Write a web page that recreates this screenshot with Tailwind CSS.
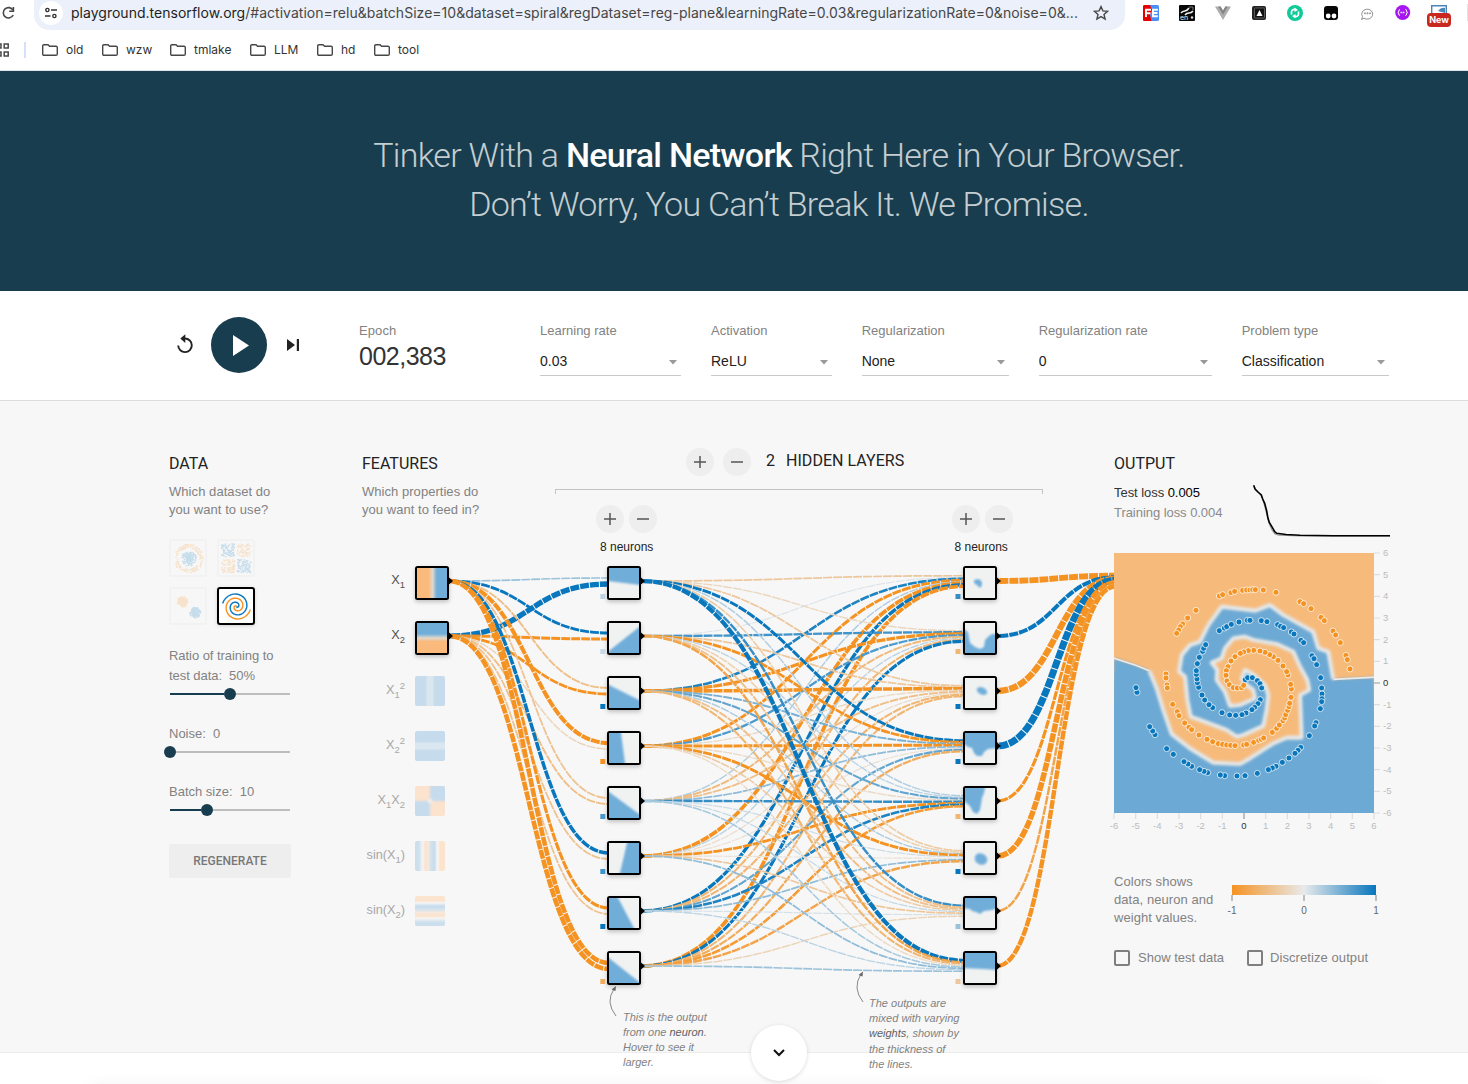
<!DOCTYPE html>
<html lang="en">
<head>
<meta charset="utf-8">
<title>A Neural Network Playground</title>
<script src="https://cdn.jsdelivr.net/npm/@tailwindcss/browser@4"></script>
</head>
<body class="w-[1468px] h-[1084px] overflow-hidden bg-white font-['Liberation_Sans',sans-serif] text-[13px] text-[#828282]">

<!-- Browser chrome -->
<header class="h-[71px] border-b border-[#dde3e6] bg-white font-[Inter,sans-serif] text-[#1f1f1f]">
  <div class="flex h-[30px] items-start">
    <svg class="mt-[5px] ml-px h-4 w-4 shrink-0" viewBox="0 0 16 16" fill="none" stroke="#474747" stroke-width="1.6"><path d="M12 5.2A5.2 5.2 0 1 0 12.2 10"/><path d="M12.4 2v4.2H8.2"/></svg>
    <div class="ml-[17px] flex h-[30px] w-[1091px] shrink-0 items-start rounded-b-[15px] bg-[#ebf0fa]">
      <span class="mt-px ml-[5px] flex h-6 w-6 shrink-0 items-center justify-center rounded-full bg-white">
        <svg class="h-3 w-3" viewBox="0 0 12 12" fill="none" stroke="#333" stroke-width="1.4"><circle cx="2.4" cy="3" r="1.6"/><path d="M6 3h6M0 9h5.5"/><circle cx="9.4" cy="9" r="1.6"/></svg>
      </span>
      <span class="ml-2 w-[1010px] shrink-0 whitespace-nowrap text-[14px] leading-[26px] text-[#474747] tracking-[0.02px]"><span class="text-[#1f1f1f]">playground.tensorflow.org</span>/#activation=relu&amp;batchSize=10&amp;dataset=spiral&amp;regDataset=reg-plane&amp;learningRate=0.03&amp;regularizationRate=0&amp;noise=0&amp;...</span>
      <svg class="mt-[5px] ml-3 h-4 w-4 shrink-0" viewBox="0 0 16 16" fill="none" stroke="#474747" stroke-width="1.4" stroke-linejoin="miter"><path d="M8 1.6l1.900 4.300 4.700.4-3.600 3.100 1.100 4.600L8 11.600 3.900 14 5 9.400 1.400 6.300l4.700-.4z"/></svg>
    </div>
    <div class="ml-[18px] mt-[5px] flex gap-5">
      <svg class="h-4 w-4" viewBox="0 0 16 16"><rect width="16" height="16" rx="1.500" fill="#4a8ff5"/><path d="M1.500 0H7l2 5-2 5 1.500 6h-7A1.500 1.500 0 0 1 0 14.500v-13A1.500 1.500 0 0 1 1.500 0z" fill="#e80000"/><path d="M3 12V4.800h5M3 8.200h4.500M14.800 4.800H10v6.400h4.800M10 8h4.500" stroke="#fff" stroke-width="1.900" fill="none"/></svg>
      <svg class="h-4 w-4" viewBox="0 0 16 16"><rect width="16" height="16" rx="1" fill="#080808"/><path d="M2 8c3-4 5 0 8-5M6 10c3-4 5 0 8-4" stroke="#eee" stroke-width="1.500" fill="none"/><circle cx="13" cy="12.500" r="1.200" fill="#ddd"/><text x="1" y="14.500" font-size="7" fill="#eee">en</text><path d="M10 2h4v3" stroke="#777" fill="none"/></svg>
      <svg class="h-4 w-4" viewBox="0 0 16 16"><path d="M0 1.500h5.500L8 6l2.500-4.500H16L8 15z" fill="#adadad"/><path d="M3.200 1.500h2.500L8 5.500l2.300-4h2.500L8 9.800z" fill="#858585"/></svg>
      <svg class="h-4 w-4" viewBox="0 0 16 16"><rect x="1" y="1" width="14" height="14" rx="2" fill="#222"/><rect x="3.500" y="3" width="10" height="10" rx="1" fill="#111" stroke="#777" stroke-width=".7"/><path d="M8.500 5l3 6h-6z" fill="#fff"/></svg>
      <svg class="h-4 w-4" viewBox="0 0 16 16"><circle cx="8" cy="8" r="8" fill="#0fca98"/><path d="M4.500 9.500V7a2.500 2.500 0 0 1 4-2M11.500 6.500V9a2.500 2.500 0 0 1-4 2" stroke="#fff" stroke-width="1.700" fill="none"/><path d="M7.500 2.500L11 5 7.500 7zM8.500 13.500L5 11l3.500-2z" fill="#fff"/></svg>
      <svg class="h-4 w-4" viewBox="0 0 16 16"><rect x="1" y="1" width="14" height="14" rx="3" fill="#050505"/><circle cx="5.200" cy="11" r="2.400" fill="#fff"/><circle cx="11" cy="11" r="2.400" fill="#fff"/></svg>
      <svg class="h-4 w-4" viewBox="0 0 16 16" fill="none" stroke="#777" stroke-width=".8"><path d="M5 13.200L2.500 14.500l1-2.800A5.500 5 0 1 1 5 13.200z"/><circle cx="6" cy="8.300" r=".6"/><circle cx="8.500" cy="8.300" r=".6"/><circle cx="11" cy="8.300" r=".6"/></svg>
      <svg class="h-4 w-4" viewBox="0 0 16 16"><circle cx="7.700" cy="7.500" r="7.500" fill="#a616f0"/><path d="M5 4.500Q3.800 4.500 3.800 6T2.800 7.500Q3.800 7.500 3.800 9T5 10.500M10.400 4.500Q11.600 4.500 11.600 6t1 1.500q-1 0-1 1.500t-1.200 1.500" stroke="#fff" fill="none"/><path d="M5.500 7.500h4.500" stroke="#fff" stroke-width="1.300" stroke-dasharray="1.300 .8"/></svg>
      <div class="relative h-4 w-4">
        <svg class="h-4 w-4" viewBox="0 0 16 16"><path d="M.7 9V.7h14.600V9" fill="none" stroke="#4a85b8" stroke-width="1.400"/><path d="M7 6q3-4 7-3v5z" fill="#4a85b8"/></svg>
        <span class="absolute -left-1 top-[8px] h-[14px] w-6 rounded-[4px] bg-[#c8281f] text-center text-[9px] leading-[14px] font-bold text-white">New</span>
      </div>
    </div>
    <div class="ml-auto mt-1 h-[17px] w-px bg-[#e3e3e3]"></div>
  </div>
  <nav class="flex h-10 items-center text-[12px] text-[#333]">
    <svg class="h-[14px] w-[9px]" viewBox="0 0 9 14" fill="none" stroke="#474747" stroke-width="1.500"><path d="M-3 1h4v4h-4zM4.200.9h4v4h-4zM-3 9h4v4h-4zM4.200 9h4v4h-4z"/></svg>
    <div class="ml-[15px] h-4 w-[2px] bg-[#d3e1fb]"></div>
    <div id="bookmarks" class="contents"></div>
  </nav>
</header>

<!-- Banner -->
<section class="h-[220px] bg-[#183d4e] pt-[60px] pl-[90px] text-center font-[Roboto,sans-serif] text-[34px] leading-[49px] font-light text-white/75">
  <h1 class="whitespace-nowrap"><span class="tracking-[-0.73px]">Tinker With a <b class="font-medium text-white">Neural Network</b> Right Here in Your Browser.</span><br><span class="tracking-[-0.7px]">Don’t Worry, You Can’t Break It. We Promise.</span></h1>
</section>

<!-- Top controls -->
<section class="relative flex h-[110px] items-start border-b border-[#dcdcdc] bg-white pl-[175px] shadow-[0_1px_3px_rgba(0,0,0,.08)]">
  <svg class="mt-[43px] h-5 w-5" viewBox="0 0 20 20"><path d="M10 4.500A6.800 6.800 0 1 1 3.200 11.500" fill="none" stroke="#222" stroke-width="1.900"/><path d="M10.300.200V9L5.300 4.600z" fill="#222"/></svg>
  <div class="mt-[26px] ml-4 flex h-14 w-14 items-center justify-center rounded-full bg-[#183d4e]"><svg class="ml-[3px] h-[21px] w-4" viewBox="0 0 16 21"><path d="M0 0l16 10.500L0 21z" fill="#fff"/></svg></div>
  <svg class="mt-12 ml-5 h-3 w-3" viewBox="0 0 12 12"><path d="M0 0l8 6-8 6zM9.800 0H12v12H9.800z" fill="#222"/></svg>
  <div class="ml-[60px] w-[181px] pt-8">
    <div class="leading-[16px] tracking-[0.1px]">Epoch</div>
    <div class="mt-[2px] text-[25px] leading-[30px] tracking-[-0.5px] text-[#333]">002,383</div>
  </div>
  <div id="selects" class="flex gap-[30px] pt-8"></div>
</section>

<!-- Playground -->
<main class="relative h-[652px] border-b border-[#ececec] bg-[#f7f7f7]">
  <div class="flex">
    <!-- Data column -->
    <section class="ml-[169px] w-[193px] pt-[53px]">
      <h2 class="font-[Roboto,sans-serif] text-[16px] leading-[19px] text-[#222]">DATA</h2>
      <p class="mt-[10px] leading-[18px] tracking-[0.06px]">Which dataset do<br>you want to use?</p>
      <svg id="datasets" class="mt-5 h-[88px] w-[88px] overflow-visible" viewBox="0 0 88 88"></svg>
      <div class="mt-[19px] leading-[20px] tracking-[-0.05px]">Ratio of training to<br>test data:&nbsp; 50%</div>
      <div class="mt-[2px] flex h-3 w-[121px] items-center"><i class="ml-px h-[2px] w-[54px] bg-[#183d4e]"></i><i class="h-3 w-3 rounded-full bg-[#183d4e]"></i><i class="h-[2px] flex-1 bg-[#bdbdbd]"></i></div>
      <div class="mt-6 leading-[20px]">Noise:&nbsp; 0</div>
      <div class="mt-[2px] -ml-[5px] flex h-3 w-[126px] items-center"><i class="h-3 w-3 rounded-full bg-[#183d4e]"></i><i class="h-[2px] flex-1 bg-[#bdbdbd]"></i></div>
      <div class="mt-6 leading-[20px]">Batch size:&nbsp; 10</div>
      <div class="mt-[2px] flex h-3 w-[121px] items-center"><i class="ml-px h-[2px] w-[31px] bg-[#183d4e]"></i><i class="h-3 w-3 rounded-full bg-[#183d4e]"></i><i class="h-[2px] flex-1 bg-[#bdbdbd]"></i></div>
      <button class="mt-7 h-[34px] w-[122px] rounded-[2px] bg-[#eeeeee] font-[Roboto,sans-serif] text-[12px] font-medium text-[#777]">REGENERATE</button>
    </section>
    <!-- Features column -->
    <section class="w-[193px] pt-[53px]">
      <h2 class="font-[Roboto,sans-serif] text-[16px] leading-[19px] text-[#222]">FEATURES</h2>
      <p class="mt-[10px] leading-[18px] tracking-[0.04px]">Which properties do<br>you want to feed in?</p>
    </section>
    <!-- Hidden layers -->
    <section class="w-[488px] pt-[47px]">
      <div class="flex h-7 items-center pl-[132px] font-[Roboto,sans-serif] text-[16px] text-[#222]">
        <span class="-ml-px flex h-7 w-7 items-center justify-center rounded-full bg-[#eee]"><svg class="h-3 w-3" viewBox="0 0 12 12" stroke="#555" stroke-width="1.500"><path d="M0 6h12M6 0v12"/></svg></span>
        <span class="ml-[9px] flex h-7 w-7 items-center justify-center rounded-full bg-[#eee]"><svg class="h-3 w-3" viewBox="0 0 12 12" stroke="#555" stroke-width="1.500"><path d="M0 6h12"/></svg></span>
        <span class="ml-[15px] -mt-[2px]">2</span><span class="-mt-[2px] ml-[11px] tracking-[0.04px]">HIDDEN LAYERS</span>
      </div>
      <div class="mt-[13px] h-[5px] border border-b-0 border-[#c4c4c4]"></div>
      <div class="mt-[11px] flex gap-[265px] pl-[41px] text-[12px] text-[#222]">
        <div class="w-[62px]"><div class="flex gap-[5px]">
          <span class="flex h-7 w-7 items-center justify-center rounded-full bg-[#eee]"><svg class="h-3 w-3" viewBox="0 0 12 12" stroke="#555" stroke-width="1.500"><path d="M0 6h12M6 0v12"/></svg></span>
          <span class="flex h-7 w-7 items-center justify-center rounded-full bg-[#eee]"><svg class="h-3 w-3" viewBox="0 0 12 12" stroke="#555" stroke-width="1.500"><path d="M0 6h12"/></svg></span></div>
          <div class="mt-[6px] ml-1 whitespace-nowrap leading-[16px]">8 neurons</div></div>
        <div class="ml-[28.500px] w-[62px]"><div class="flex gap-[5px]">
          <span class="flex h-7 w-7 items-center justify-center rounded-full bg-[#eee]"><svg class="h-3 w-3" viewBox="0 0 12 12" stroke="#555" stroke-width="1.500"><path d="M0 6h12M6 0v12"/></svg></span>
          <span class="flex h-7 w-7 items-center justify-center rounded-full bg-[#eee]"><svg class="h-3 w-3" viewBox="0 0 12 12" stroke="#555" stroke-width="1.500"><path d="M0 6h12"/></svg></span></div>
          <div class="mt-[6px] ml-[3px] whitespace-nowrap leading-[16px]">8 neurons</div></div>
      </div>
    </section>
    <!-- Output column -->
    <section class="relative z-10 ml-[71px] w-[300px] pt-[53px]">
      <h2 class="font-[Roboto,sans-serif] text-[16px] leading-[19px] text-[#222]">OUTPUT</h2>
      <div class="flex">
        <div class="w-[139px] pt-[10px] leading-[20px] tracking-[-0.05px]"><div class="text-[#333]">Test loss <span class="text-black">0.005</span></div><div class="text-[#8a8a8a]">Training loss 0.004</div></div>
        <svg class="mt-[11px] h-[54px] w-[140px]" viewBox="1253 484 140 54" fill="none"><path d="M1254 486L1256 490 1258 492 1261 495 1263 500 1265 507 1267 515 1269 523 1272 530 1275 534 1279 535.200 1300 536 1390 536" stroke="#999" stroke-width="1.200"/><path d="M1253.700 485.300L1255 489 1258 492 1261.300 495 1262.700 499 1264.700 503.300 1266.700 511 1268 518.300 1269.300 522.300 1272.300 527.300 1274.700 531.700 1276.700 533.300 1286 534.500 1300 535.200 1333 535.700 1390 535.700" stroke="#000" stroke-width="1.600"/></svg>
      </div>
      <svg id="heatmap" class="mt-[15px] block h-[285px] w-[290px] overflow-visible" viewBox="0 0 290 285"></svg>
      <div class="mt-[35px] flex leading-[18px] tracking-[0.06px]">
        <p class="w-[118px] whitespace-nowrap">Colors shows<br>data, neuron and<br>weight values.</p>
        <div class="w-[144px] pt-3">
          <div class="h-[10px] bg-[linear-gradient(90deg,#f59322,#e8eaeb,#0877bd)]"></div>
          <svg class="block h-6 w-[144px] overflow-visible" viewBox="0 0 144 24"><path d="M0 0v6M72 0v6M144 0v6" stroke="#aaa" stroke-width="1.500"/><g font-size="10" fill="#666" text-anchor="middle"><text x="0" y="19">-1</text><text x="72" y="19">0</text><text x="144" y="19">1</text></g></svg>
        </div>
      </div>
      <div class="mt-[21px] flex items-center">
        <i class="h-4 w-4 rounded-[2px] border-2 border-[#7f7f7f]"></i><span class="ml-2 w-[109px]">Show test data</span>
        <i class="h-4 w-4 rounded-[2px] border-2 border-[#7f7f7f]"></i><span class="ml-[7px] tracking-[0.08px]">Discretize output</span>
      </div>
    </section>
  </div>

  <!-- Network diagram, drawn on a free canvas in page coordinates -->
  <svg id="network" class="pointer-events-none absolute left-[362px] top-[139px] h-[544px] w-[752px]" viewBox="362 540 752 544"></svg>

  <p class="absolute left-[623px] top-[609px] text-[11px] leading-[15px] whitespace-nowrap italic">This is the output<br>from one <b class="font-normal text-[#606060]">neuron</b>.<br>Hover to see it<br>larger.</p>
  <p class="absolute left-[869px] top-[595px] text-[11px] leading-[15.200px] whitespace-nowrap italic">The outputs are<br>mixed with varying<br><b class="font-normal text-[#606060]">weights</b>, shown by<br>the thickness of<br>the lines.</p>
  <div class="absolute left-[751px] top-[624px] flex h-14 w-14 items-center justify-center rounded-full bg-white shadow-[0_1px_4px_rgba(0,0,0,.14)]"><svg class="h-2 w-3" viewBox="0 0 12 8" fill="none" stroke="#111" stroke-width="2"><path d="M1 1l5 5 5-5"/></svg></div>
</main>
<div class="mx-auto mt-[33px] h-5 w-[1290px] shadow-[0_0_16px_rgba(0,0,0,.06)]"></div>

<script>
const get = id => document.getElementById(id);

get('bookmarks').innerHTML = [['old',16,60],['wzw',0,68],['tmlake',0,80],['LLM',0,67],['hd',0,57],['tool',0,60]].map(([t,m,w]) =>
  `<div class="flex shrink-0 items-center" style="width:${w}px;margin-left:${m}px"><svg class="h-3 w-4 shrink-0" viewBox="0 0 16 12" fill="none" stroke="#474747" stroke-width="1.400"><path d="M.7 2Q.7.700 2 .700h4l1.600 1.600H14q1.300 0 1.300 1.300V10q0 1.300-1.300 1.300H2Q.7 11.300.7 10z"/></svg><span class="ml-2">${t}</span></div>`).join('');

get('selects').innerHTML = [['Learning rate','0.03',141],['Activation','ReLU',120.700],['Regularization','None',147],['Regularization rate','0',173],['Problem type','Classification',147]].map(([l,v,w]) =>
  `<div style="width:${w}px"><div class="leading-[16px] whitespace-nowrap">${l}</div><div class="mt-2 flex h-[29px] items-center justify-between border-b border-[#c9c9c9] pr-1 text-[14px] text-[#222]"><span class="mt-px">${v}</span><svg class="mt-[3px] h-[5px] w-2" viewBox="0 0 8 5"><path d="M0 0h8L4 4.500z" fill="#999"/></svg></div></div>`).join('');

// Seeded random numbers keep the thumbnails stable
let seed = 7;
const rnd = () => (seed = (seed * 16807) % 2147483647) / 2147483647;
const O = '#f59322', B = '#0877bd';
const px = (x, y, c) => `<rect x="${x.toFixed(1)}" y="${y.toFixed(1)}" width="1.400" height="1.400" fill="${c}"/>`;
const frame = (x, y, body) => `<g transform="translate(${x} ${y})" opacity=".2"><rect x="1" y="1" width="36" height="36" rx="1" fill="none" stroke="#e2e2e2" stroke-width="2"/>${body}</g>`;
let circ = '', xor = '', gauss = '';
for (let i = 0; i < 150; i++) {
  let a = rnd() * 6.283, r = 10.500 + rnd() * 4;
  circ += px(19 + r * Math.cos(a), 19 + r * Math.sin(a), O);
  a = rnd() * 6.283; r = rnd() * 7.500;
  circ += px(19 + r * Math.cos(a), 19 + r * Math.sin(a), B);
  for (let k = 0; k < 2; k++) {
    const qx = rnd() < .5, qy = rnd() < .5;
    xor += px((qx ? 20 : 4) + rnd() * 13, (qy ? 20 : 4) + rnd() * 13, qx === qy ? B : O);
  }
  a = rnd() * 6.283; r = rnd() * 5.500;
  gauss += px(13 + r * Math.cos(a), 14 + r * Math.sin(a), O);
  a = rnd() * 6.283; r = rnd() * 5.500;
  gauss += px(25.500 + r * Math.cos(a), 25 + r * Math.sin(a), B);
}
const spiral = (d, c) => {
  let p = '';
  for (let t = 0; t <= 1; t += .02) {
    const a = 1.75 * t * 6.283 + d, r = t * 14.500;
    p += (p ? 'L' : 'M') + (19.500 + r * Math.sin(a)).toFixed(2) + ' ' + (19.500 + r * Math.cos(a)).toFixed(2);
  }
  return `<path d="${p}" fill="none" stroke="${c}" stroke-width="1.400"/>`;
};
get('datasets').innerHTML = frame(0, 0, circ) + frame(48, 0, xor) + frame(0, 48, gauss) +
  `<g transform="translate(48 48)"><rect x="1" y="1" width="36" height="36" rx="2" fill="#fff" stroke="#000" stroke-width="2" class="drop-shadow"/>${spiral(3.1416, O)}${spiral(0, B)}</g>`;

// Output heatmap
const outline = 'M42 655L105 675 148 692 170 745 190 810 215 882 270 925 340 968 420 972 450 955 520 910 560 893 605 893 600 765 628 750 622 720 600 680 580 635 530 612 460 600 435 590 400 595 375 625 365 655 335 668 352 690 350 720 375 755 390 798 420 795 465 775 460 750 440 735 425 715 435 690 460 703 495 735 505 765 500 810 490 858 430 885 410 890 380 870 300 840 272 830 262 780 255 710 237 695 245 645 270 615 300 605 325 555 365 500 465 512 510 495 550 525 640 575 655 625 685 635 700 718 822 712';
const inner = outline.replace('M42 655L105 675 148', 'M148').replace('148 692', '148 692L').replace(' 822 712', '');
const oDots = '358,468 368,464 393,458 404,454 428,451 440,450 450,450 458,449 466,449 490,450 528,457 600,485 611,491 633,506 663,532 673,542 699,573 707,585 721,608 738,646 742,659 750,687 288,511 263,534 248,552 241,560 236,570 230,580 198,702 198,714 201,735 202,744 218,793 232,815 237,827 254,849 267,862 275,869 297,885 321,898 338,905 355,911 368,913 380,915 392,916 405,917 431,915 440,913 461,907 476,901 484,898 491,894 517,877 530,865 538,855 549,842 554,834 557,824 563,811 567,800 569,790 573,772 574,747 572,733 564,705 560,695 549,678 534,661 520,650 509,644 495,637 480,633 461,631 445,632 431,636 421,640 405,650 393,663 384,680 379,692 378,706 381,723 388,734 400,743 412,744 425,743 431,736';
const bDots = '436,719 443,713 457,713 472,722 480,731 485,744 481,779 474,791 464,802 456,809 438,819 426,824 407,826 389,825 366,818 338,803 327,794 314,780 306,765 296,742 292,728 291,717 289,703 289,692 292,671 298,652 308,634 311,625 317,614 358,572 373,564 380,560 394,553 417,546 442,541 450,541 484,542 501,545 533,554 542,559 551,563 574,576 582,582 603,601 611,608 636,647 642,656 650,674 662,713 665,744 666,762 666,776 665,785 661,806 648,848 644,858 628,887 602,922 594,931 585,940 567,954 547,967 528,979 517,984 505,989 472,1000 435,1007 411,1008 374,1007 361,1005 323,998 312,994 299,989 275,979 264,972 252,965 220,943 200,926 165,884 158,873 149,860 111,757 108,743';
const dots = (s, c) => s.split(' ').map(p => { const [x, y] = p.split(','); return `<circle cx="${x}" cy="${y}" r="9" fill="${c}" stroke="#fff" stroke-opacity=".8" stroke-width="2.800"/>`; }).join('');
let hm = `<defs><clipPath id="hc"><rect width="260" height="260"/></clipPath><filter id="hb" x="-10%" y="-10%" width="120%" height="120%"><feGaussianBlur stdDeviation="5.500"/></filter><filter id="hs"><feGaussianBlur stdDeviation="4"/></filter><filter id="he" x="-10%" y="-50%" width="120%" height="200%"><feGaussianBlur stdDeviation="2"/></filter></defs>
<g clip-path="url(#hc)"><rect width="260" height="260" fill="#f6ba7b"/><g transform="scale(.33333) translate(-42 -339)">
<path d="${outline}L840 1140 20 1140z" fill="#6ca9d4" filter="url(#hs)"/>
<path d="M30 651L105 675 148 692M700 718L840 711" stroke="#e8eaeb" stroke-width="5" fill="none" filter="url(#he)"/>
<path d="${inner}" stroke="#edeff0" stroke-width="11" stroke-linejoin="round" fill="none" filter="url(#hb)"/>
${dots(oDots, O)}${dots(bDots, B)}</g></g><g font-size="9.500">`;
for (let v = -6; v <= 6; v++) {
  const p = (v + 6) * 260 / 12, c = v ? '#bbb' : '#333', s = v ? '#ddd' : '#999';
  hm += `<path d="M${p} 260v6M260 ${260 - p}h6" stroke="${s}" stroke-width="1.200"/><text x="${p}" y="276" text-anchor="middle" fill="${c}">${v}</text><text x="269" y="${263 - p}" fill="${c}">${v}</text>`;
}
get('heatmap').innerHTML = hm + '</g>';

// Network: weight sets the colour and thickness of each link
const mix = w => {
  const z = [232, 234, 235], e = w < 0 ? [245, 147, 34] : [8, 119, 189], t = Math.min(1, Math.abs(w));
  return `rgb(${z.map((v, i) => Math.round(v + (e[i] - v) * t)).join()})`;
};
const link = (x1, y1, x2, y2, w) => { const m = (x1 + x2) / 2; return `<path d="M${x1} ${y1}C${m} ${y1} ${m} ${y2} ${x2} ${y2}" fill="none" stroke="${mix(w)}" stroke-width="${1 + 1.8 * Math.abs(w)}" stroke-dasharray="9 1" stroke-dashoffset="-2.300"/>`; };
const layer1 = [[.35,2.4],[1,-1.1],[-.5,-1],[-1.7,-.25],[-.45,-.5],[1.4,-.45],[-1.2,-.45],[-2,-2]];
const layer2 = [
  [-.4,.06,.9,-1.1,.25,-1.5,1.3,-1.5],
  [-.22,.75,-1.2,.7,-.55,.2,-.6,1.2],
  [-.4,-.4,-1.4,-.2,-.5,-.15,-.6,-.6],
  [1.1,-1,.5,-1.1,.4,-.12,.6,-.7],
  [.25,.2,.6,-.2,.8,-1,.9,-.9],
  [-.35,-.3,.25,-1.1,.12,-.1,.4,-.8],
  [.8,-.5,-.5,-.35,.15,-.4,.08,-.25],
  [1.8,-.8,-.6,-.2,.3,.4,.2,.35]];
const layer3 = [-2.7,1.7,-2.9,3.3,-1.2,-2.5,-.8,-1.9];
const Y = i => 581 + 55 * i;
let s = '<defs><filter id="nb"><feGaussianBlur stdDeviation=".8"/></filter><clipPath id="nc"><rect width="30" height="30"/></clipPath></defs>';
layer1.forEach((r, i) => r.forEach((w, j) => s += link(449, Y(j), 609, Y(i) + (j - .5) * 6, w)));
layer2.forEach((r, i) => r.forEach((w, j) => s += link(641, Y(j), 965, Y(i) + (j - 3.5) * 1.5, w)));
layer3.forEach((w, j) => s += link(997, Y(j), 1116, 581 + (j - 3.5) * 1.5, w));

const box = (x, i, body) => `<g transform="translate(${x} ${566 + 55 * i})"><rect width="34" height="34" rx="2.500" fill="#000" style="filter:drop-shadow(0 2px 2px rgba(0,0,0,.22))"/><path d="M34 11.500l4 3.500-4 3.500z" fill="#000"/><g transform="translate(2 2)" clip-path="url(#nc)"><rect width="30" height="30" fill="#f0f2f2"/>${body}</g></g>`;
const shape = p => `<path d="M${p}z" fill="#70add9" filter="url(#nb)"/>`;
const blob = (x, y, a, b, r) => `<ellipse cx="${x}" cy="${y}" rx="${a}" ry="${b}" transform="rotate(${r} ${x} ${y})" fill="#70add9" filter="url(#nb)"/>`;
const col1 = ['-4 -4 34 -4 34 17.300-4 12.500','-4 31 34 1 34 34-4 34','-4 5 34 24 34 34-4 34','-4-4 11.500-4 16.500 34-4 34','-4 1 34 29 34 34-4 34','19-4 34-4 34 34 10 34','-4-4 7-4 27 34-4 34','-4 2 34 32 34 34-4 34'];
const bias1 = [.2,.15,1,-1,.7,.75,1,-.7];
col1.forEach((p, i) => s += box(607, i, shape(p)) + `<rect x="600.300" y="${594 + 55 * i}" width="5" height="5" fill="${mix(bias1[i])}"/>`);
const col2 = [shape('9 12L14 11 17 14 17 17 15 20 12 17 9 15'), shape('-4 4L3 9 5 20 10 24 15 26 19 24 20 17 24 13 27 11 34 11 34 34-4 34'), blob(17,13,5.500,3.500,25),
  shape('-4-4L34-4 34 15 23 16 19 19 17 23 12 23 9 20 7 15 3 14-4 9'), shape('-4-4L21-4 19 5 17 10 16 16 15 22 12 26 8 24 5 18-4 11'), blob(16,16,6.500,5.500,30),
  shape('-4-4L34-4 34 10 27 12 19 13 15 16 11 14 7 13 5 11-4 10'), shape('-4-4L34-4 34 17 18 16-4 15')];
const bias2 = [.8,-.6,1,1,-.6,1,.35,-.4];
col2.forEach((b, i) => s += box(963, i, b) + `<rect x="955.500" y="${594 + 55 * i}" width="5" height="5" fill="${mix(bias2[i])}"/>`);

// Input features
s += `<defs>
<linearGradient id="f0"><stop offset=".38" stop-color="#f9ba7b"/><stop offset=".52" stop-color="#e0d8cd"/><stop offset=".66" stop-color="#70add9"/></linearGradient>
<linearGradient id="f1" x2="0" y2="1"><stop offset=".36" stop-color="#70add9"/><stop offset=".5" stop-color="#e0d8cd"/><stop offset=".62" stop-color="#f9ba7b"/></linearGradient>
<linearGradient id="f2"><stop offset=".34" stop-color="#c6dbec"/><stop offset=".42" stop-color="#dae7f1"/><stop offset=".58" stop-color="#dae7f1"/><stop offset=".66" stop-color="#c6dbec"/></linearGradient>
<linearGradient id="f3" href="#f2" x2="0" y2="1"/>
<linearGradient id="f5"><stop offset=".12" stop-color="#cbdfed"/><stop offset=".25" stop-color="#f5f3f2"/><stop offset=".35" stop-color="#fbe3cd"/><stop offset=".45" stop-color="#f6e8dc"/><stop offset=".52" stop-color="#d5e3ec"/><stop offset=".64" stop-color="#c6dbec"/><stop offset=".75" stop-color="#f5f5f5"/><stop offset=".84" stop-color="#fbe3cd"/></linearGradient>
<linearGradient id="f6" x1="0" y1="1" x2="0" y2="0"><stop offset=".12" stop-color="#cbdfed"/><stop offset=".25" stop-color="#f5f3f2"/><stop offset=".35" stop-color="#fbe3cd"/><stop offset=".45" stop-color="#f6e8dc"/><stop offset=".55" stop-color="#d5e3ec"/><stop offset=".66" stop-color="#c6dbec"/><stop offset=".77" stop-color="#f5f5f5"/><stop offset=".84" stop-color="#fbe3cd"/></linearGradient>
<clipPath id="fc"><rect width="30" height="30" rx="2"/></clipPath></defs>`;
s += box(415, 0, '<rect width="30" height="30" fill="url(#f0)"/>') + box(415, 1, '<rect width="30" height="30" fill="url(#f1)"/>');
[2, 3, 5, 6].forEach(i => s += `<rect x="415" y="${566 + 55 * i}" width="30" height="30" rx="2" fill="url(#f${i})"/>`);
s += `<g transform="translate(415 786)" clip-path="url(#fc)"><rect width="30" height="30" fill="#fbe3cd"/><path d="M15-3H33V15H15V33H-3V15H15z" fill="#c6dbec" filter="url(#nb)"/><circle cx="15" cy="15" r="2.500" fill="#eee" filter="url(#nb)"/></g>`;
const sub = t => `<tspan font-size="9.500" dy="4">${t}</tspan>`;
const names = ['X' + sub(1), 'X' + sub(2), 'X' + sub(1) + '<tspan font-size="9.500" dy="-9">2</tspan>', 'X' + sub(2) + '<tspan font-size="9.500" dy="-9">2</tspan>',
  'X' + sub(1) + '<tspan dy="-4">X</tspan>' + sub(2), 'sin(X' + sub(1) + '<tspan dy="-4">)</tspan>', 'sin(X' + sub(2) + '<tspan dy="-4">)</tspan>'];
names.forEach((n, i) => s += `<text x="405" y="${584 + 55 * i}" text-anchor="end" font-size="12.700" fill="${i < 2 ? '#505050' : '#a8a8a8'}">${n}</text>`);

// Callout arrows
s += `<g fill="none" stroke="#888"><path d="M616 1016Q605 1002 614 989"/><path d="M863 1002Q852 988 861 974"/></g><path d="M616 986l-4.500 3.500 4 1.500zM863 971.500l-4.500 3.500 4 1.500z" fill="#666"/>`;
get('network').innerHTML = s;
</script>
</body>
</html>
